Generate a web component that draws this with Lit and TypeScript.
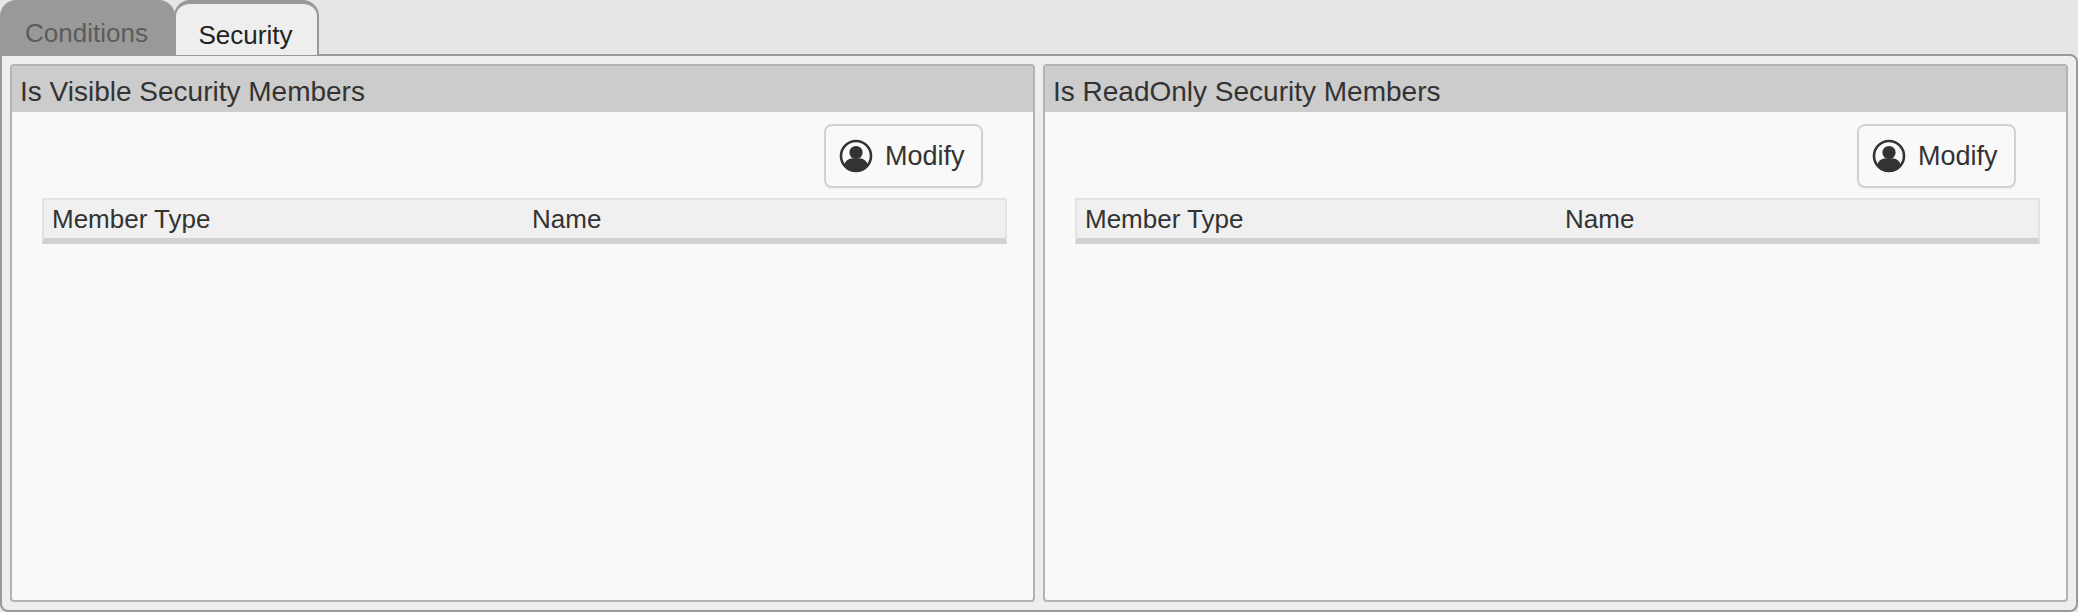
import { html, css, LitElement } from "lit";
import { customElement, property } from "lit/decorators.js";

@customElement("security-panel")
export class SecurityPanel extends LitElement {
	static styles = css`
		:host {
			display: flex;
			flex-direction: column;
			flex: 1 1 0;
			min-width: 0;
			border: 2px solid #b3b3b3;
			border-radius: 4px;
			background: #f9f9f9;
			overflow: hidden;
		}
		.title {
			height: 46px;
			line-height: 52px;
			padding-left: 8px;
			background: #cccccc;
			color: #333;
			font-size: 28px;
		}
		.toolbar {
			display: flex;
			justify-content: flex-end;
			padding: 12px 50px 10px 0;
		}
		.modify {
			display: flex;
			align-items: center;
			gap: 12px;
			box-sizing: border-box;
			width: 159px;
			height: 64px;
			padding-left: 13px;
			border: 2px solid #d2d2d2;
			border-radius: 8px;
			background: #f9f9f9;
			box-shadow: 0 1px 2px rgba(0, 0, 0, 0.05);
			color: #333;
			font: inherit;
			font-size: 27px;
		}
		.grid {
			margin: 0 26px 0 30px;
			box-sizing: border-box;
			display: grid;
			grid-template-columns: 480px 1fr;
			align-items: center;
			height: 46px;
			padding: 0 0 0 8px;
			background: #f0f0f0;
			border: 2px solid #e3e3e3;
			border-bottom: 6px solid #d2d2d2;
			color: #333;
			font-size: 26px;
		}
	`;

	@property({ type: String }) heading = "";

	render() {
		return html`
			<div class="title">${this.heading}</div>
			<div class="toolbar">
				<button class="modify">
					<svg width="34" height="34" viewBox="0 0 34 34">
						<circle cx="17" cy="17" r="15" fill="none" stroke="#333" stroke-width="2.6" />
						<circle cx="17" cy="13.5" r="6.6" fill="#333" />
						<path d="M5 27c1-5.500 5-7.500 7.500-7.500h9c2.500 0 6.500 2 7.500 7.500a15 15 0 0 1-24 0z" fill="#333" />
					</svg>
					Modify
				</button>
			</div>
			<div class="grid"><span>Member Type</span><span>Name</span></div>
		`;
	}
}

@customElement("app-root")
export class AppRoot extends LitElement {
	static styles = css`
		:host {
			display: flex;
			flex-direction: column;
			height: 612px;
			background: #e6e6e6;
			font-family: "Liberation Sans", Arial, sans-serif;
		}
		.tabs {
			display: flex;
			height: 55px;
			flex: none;
			position: relative;
			z-index: 1;
			margin-bottom: -1px;
		}
		.tab {
			box-sizing: border-box;
			height: 55px;
			padding-right: 2px;
			border-radius: 16px 16px 0 0;
			font-size: 26px;
			text-align: center;
		}
		.inactive {
			width: 175px;
			line-height: 66px;
			background: #999999;
			color: #5c5c5c;
		}
		.active {
			width: 145px;
			margin-left: -1px;
			line-height: 62px;
			border: 2px solid #999999;
			border-top-width: 4px;
			border-bottom: 0;
			background: #eeeeee;
			color: #222;
		}
		.content {
			flex: 1;
			display: flex;
			gap: 8px;
			padding: 8px 8px 8px 8px;
			min-height: 0;
			background: #eeeeee;
			border: 2px solid #999999;
			border-radius: 0 8px 8px 8px;
		}
	`;

	render() {
		return html`
			<div class="tabs">
				<div class="tab inactive">Conditions</div>
				<div class="tab active">Security</div>
			</div>
			<div class="content">
				<security-panel heading="Is Visible Security Members"></security-panel>
				<security-panel heading="Is ReadOnly Security Members"></security-panel>
			</div>
		`;
	}
}
